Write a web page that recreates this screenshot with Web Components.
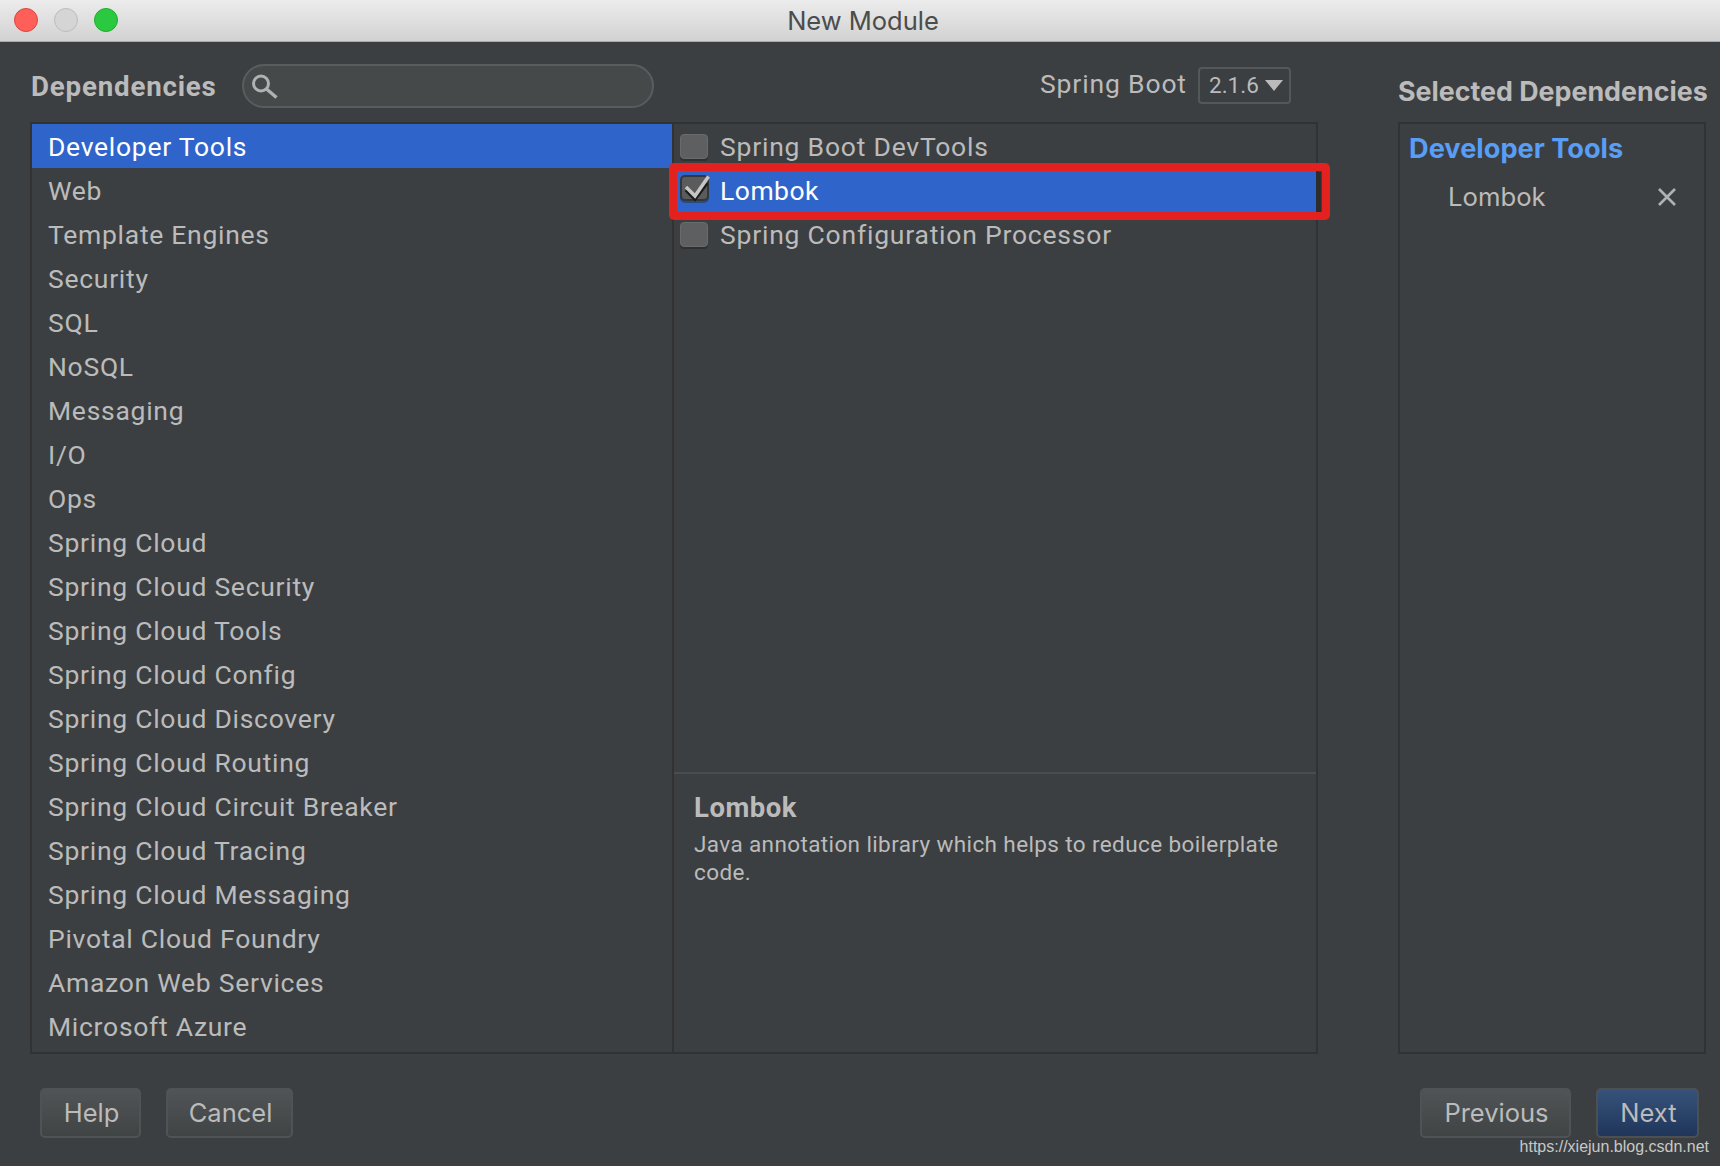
<!DOCTYPE html>
<html><head><meta charset="utf-8">
<style>
html,body{margin:0;padding:0;background:#3c3f41;}
body{font-family:Roboto,"Liberation Sans",sans-serif;color:#bbb;width:1720px;height:1166px;overflow:hidden;}
</style></head><body>
<module-dialog></module-dialog>
<script>
function def(name, html){
  customElements.define(name, class extends HTMLElement{
    connectedCallback(){
      if(this.shadowRoot) return;
      this.attachShadow({mode:'open'}).innerHTML=html;
    }
  });
}
def('mac-titlebar',`<style>
:host{display:flex;align-items:center;height:42px;box-sizing:border-box;padding:0 0 2px 14px;gap:16px;position:relative;background:linear-gradient(#ececec,#d2d2d2);border-bottom:1px solid #a9a9a9;}
i{display:block;width:24px;height:24px;border-radius:50%;box-sizing:border-box;border:1px solid}
.r{background:#fe5f58;border-color:#e0443e}.g{background:#d5d5d5;border-color:#bcbcbc}.v{background:#2bc940;border-color:#1dad2b}
span{position:absolute;left:0;right:0;top:0;padding-left:6px;text-align:center;font:25.5px/41px Inter,Roboto,sans-serif;color:#4c4c4c;}
</style><i class="r"></i><i class="g"></i><i class="v"></i><span>New Module</span>`);

def('search-field',`<style>
:host{display:flex;align-items:center;box-sizing:border-box;width:412px;height:44px;border-radius:22px;border:2px solid #5a5d5f;background:#45494a;padding-left:6px;}
svg{display:block}
</style><svg width="30" height="30" viewBox="0 0 30 30" fill="none" stroke="#afb1b3"><circle cx="11" cy="12.5" r="7.5" stroke-width="3"/><path d="M16.500 18l10 8.500" stroke-width="3.400"/></svg>`);

def('version-combo',`<style>
:host{display:flex;align-items:center;box-sizing:border-box;width:93px;height:37px;border-radius:4px;border:2px solid #55585a;background:#3c3f41;padding:0 0 2px 9px;font:22.5px Roboto,sans-serif;color:#bbb;gap:6px}
svg{display:block;margin-top:2px}
</style><slot></slot><svg width="18" height="11" viewBox="0 0 18 11"><path d="M0 0h18L9 11z" fill="#bbb"/></svg>`);

def('category-item',`<style>
:host{display:block;height:44px;line-height:45px;padding-left:16px;font-size:26.5px;letter-spacing:.72px;white-space:nowrap;color:#bbb}
:host([selected]){background:#2f65ca;color:#fff}
</style><slot></slot>`);

def('category-list',`<style>
:host{display:block;width:642px;box-sizing:border-box;border-right:2px solid #323232;}
</style><slot></slot>`);

def('dep-check',`<style>
:host{display:block;position:relative;height:44px;font-size:26.5px;letter-spacing:.78px;color:#bbb;white-space:nowrap}
.in{display:flex;align-items:center;height:100%;padding-left:6px;gap:12px}
.box{width:28px;height:25px;box-sizing:border-box;border-radius:4px;background:#5d5f61;border:1px solid #686a6c;box-shadow:0 2px 0 #2e3031;flex:none}
.t{padding-top:1px}
</style><div class="in"><span class="box"></span><span class="t"><slot></slot></span></div>`);

def('dep-check-on',`<style>
:host{display:block;position:relative;height:44px;font-size:26.5px;letter-spacing:.5px;color:#fff;white-space:nowrap;background:#2f65ca;z-index:2}
.in{display:flex;align-items:center;height:100%;padding-left:6px;gap:11px}
.box{width:29px;height:26px;box-sizing:border-box;border-radius:5px;background:#5a5b5d;border:2px solid #34373a;box-shadow:0 2px 0 #2a4a80;position:relative;flex:none;margin-bottom:4px}
svg{position:absolute;left:-2px;top:-2px;overflow:visible}
.t{padding-top:1px}
.mark{position:absolute;left:-5px;right:-14px;top:-5px;bottom:-8px;box-sizing:border-box;border:8px solid #e3221f;border-radius:5px;pointer-events:none}
.edge{position:absolute;right:-5px;top:4px;bottom:0;width:5px;background:#2b2d2f}
</style><div class="in"><span class="box"><svg width="30" height="30" viewBox="0 0 30 30" fill="none"><path d="M6 15l9 9L27 8" stroke="#1b1b1c" stroke-width="3.5"/><path d="M6 12l9 9L28.500 1.500" stroke="#c6c6c6" stroke-width="3.500"/></svg></span><span class="t"><slot></slot></span></div><span class="edge"></span><span class="mark"></span>`);

def('dep-description',`<style>
:host{display:block;border-top:2px solid #4a4c4e;box-sizing:border-box;padding:17px 20px 0 20px;height:280px;}
h3{margin:0;font:700 27.5px/34px Roboto,sans-serif;color:#bbb;letter-spacing:.5px}
p{margin:5px 0 0;font-size:22.5px;line-height:28px;color:#bbb;letter-spacing:.385px}
</style><h3>Lombok</h3><p>Java annotation library which helps to reduce boilerplate code.</p>`);

def('selected-panel',`<style>
:host{display:block;box-sizing:border-box;width:308px;height:932px;border:2px solid #323232;padding:7px 9px 0}
h4{margin:0;font:700 27.2px/36px Inter,sans-serif;color:#589df6;white-space:nowrap}
.row{display:flex;align-items:center;justify-content:space-between;height:44px;margin-top:7px;padding:0 19px 0 39px;font:25.7px Inter,sans-serif;color:#bbb}
svg{display:block;margin-top:1px}
</style><h4>Developer Tools</h4><div class="row"><span>Lombok</span><svg width="18" height="18" viewBox="0 0 18 18"><path d="M1 1l16 16M17 1L1 17" stroke="#afb1b3" stroke-width="2.6"/></svg></div>`);

def('dlg-button',`<style>
:host{display:flex;align-items:center;justify-content:center;box-sizing:border-box;height:50px;border-radius:5px;border:2px solid #505355;background:linear-gradient(#505456,#414445);padding:0 0 2px 2px;font:25.5px Inter,Roboto,sans-serif;color:#bbb}
:host([primary]){background:linear-gradient(#36527a,#20365a);border-color:#4c5052}
</style><slot></slot>`);

def('module-dialog',`<style>
:host{display:block;width:1720px;height:1166px;position:relative;background:#3c3f41;color:#bbb}
.head{display:flex;align-items:center;height:80px;padding:7px 0 0 31px;box-sizing:border-box}
b.t{font:700 27.7px Roboto,sans-serif;letter-spacing:.8px;color:#bbb;white-space:nowrap;margin-top:2px}
.dep{width:211px}
.sb{font-size:26.5px;letter-spacing:.85px;margin-left:386px;width:158px;white-space:nowrap;margin-bottom:4px}
.sel{font:700 26.8px Inter,sans-serif;color:#bbb;margin-left:107px;white-space:nowrap;position:relative;top:5px}
.body{display:flex;align-items:flex-start;padding-left:30px;gap:80px;}
.box{display:flex;box-sizing:border-box;width:1288px;height:932px;border:2px solid #323232;}
.right{flex:1;display:flex;flex-direction:column;min-width:0}
.checks{flex:1}
.foot{display:flex;align-items:center;padding:34px 21px 0 40px;gap:25px}
.spacer{flex:1}
.mark{position:absolute;right:11px;bottom:9px;font:16px "Liberation Sans",Arial,sans-serif;color:#c8c8c8;line-height:20px}
</style>
<mac-titlebar></mac-titlebar>
<div class="head"><b class="t dep">Dependencies</b><search-field></search-field><span class="sb">Spring Boot</span><version-combo>2.1.6</version-combo><span class="sel">Selected Dependencies</span></div>
<div class="body">
<div class="box">
<category-list>
<category-item selected>Developer Tools</category-item>
<category-item>Web</category-item>
<category-item>Template Engines</category-item>
<category-item>Security</category-item>
<category-item>SQL</category-item>
<category-item>NoSQL</category-item>
<category-item>Messaging</category-item>
<category-item>I/O</category-item>
<category-item>Ops</category-item>
<category-item>Spring Cloud</category-item>
<category-item>Spring Cloud Security</category-item>
<category-item>Spring Cloud Tools</category-item>
<category-item>Spring Cloud Config</category-item>
<category-item>Spring Cloud Discovery</category-item>
<category-item>Spring Cloud Routing</category-item>
<category-item>Spring Cloud Circuit Breaker</category-item>
<category-item>Spring Cloud Tracing</category-item>
<category-item>Spring Cloud Messaging</category-item>
<category-item>Pivotal Cloud Foundry</category-item>
<category-item>Amazon Web Services</category-item>
<category-item>Microsoft Azure</category-item>
</category-list>
<div class="right">
<div class="checks">
<dep-check>Spring Boot DevTools</dep-check>
<dep-check-on>Lombok</dep-check-on>
<dep-check>Spring Configuration Processor</dep-check>
</div>
<dep-description></dep-description>
</div>
</div>
<selected-panel></selected-panel>
</div>
<div class="foot">
<dlg-button style="width:101px">Help</dlg-button>
<dlg-button style="width:127px">Cancel</dlg-button>
<span class="spacer"></span>
<dlg-button style="width:151px">Previous</dlg-button>
<dlg-button primary style="width:103px">Next</dlg-button>
</div>
<span class="mark">https://xiejun.blog.csdn.net</span>`);
</script>
</body></html>
